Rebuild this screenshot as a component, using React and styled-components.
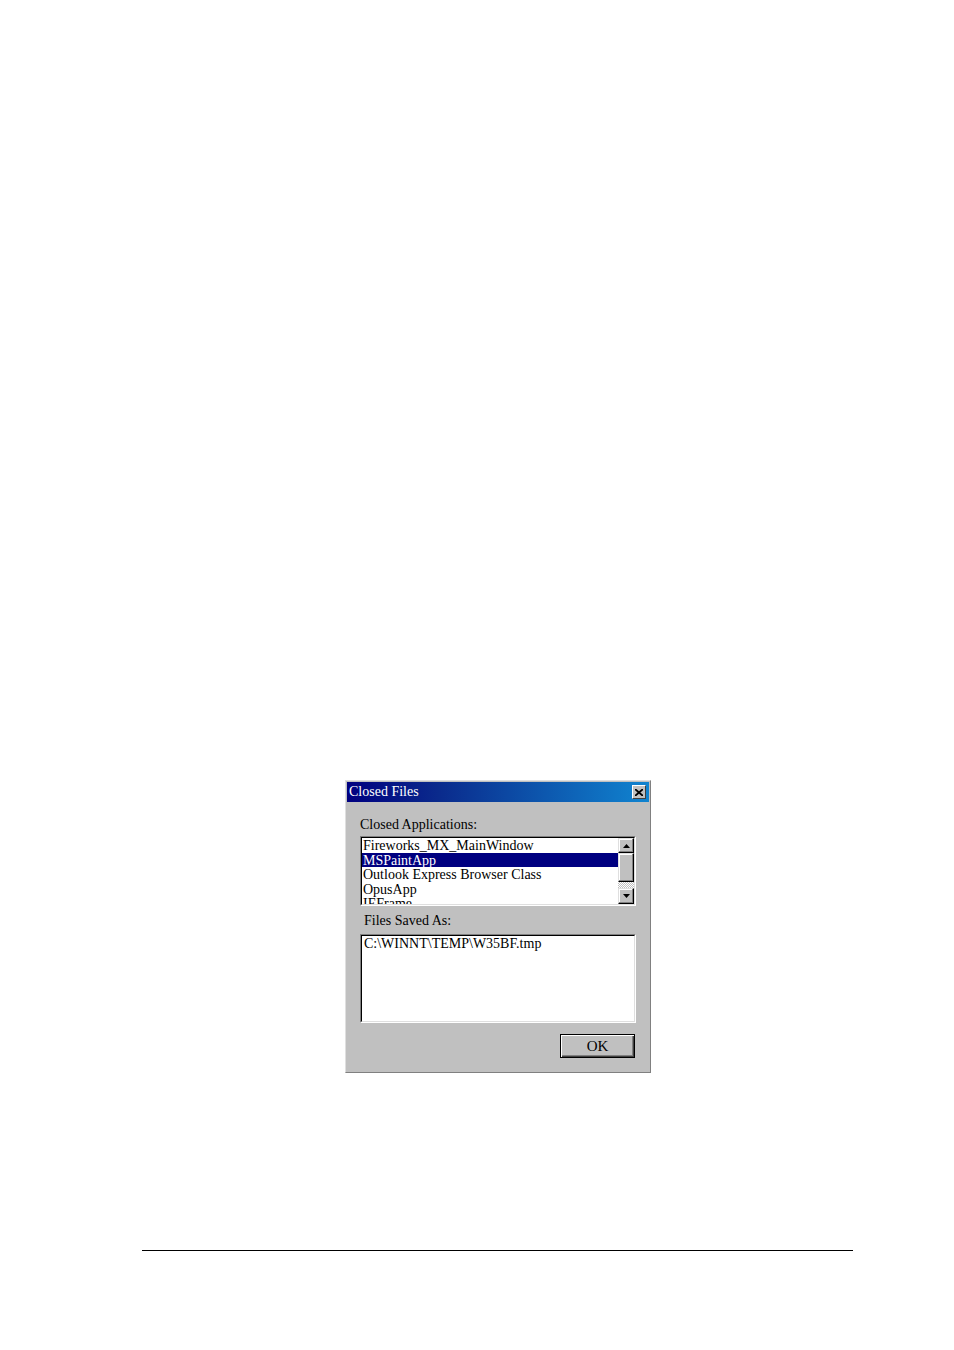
import React from 'react';
import styled, { createGlobalStyle } from 'styled-components';

const Global = createGlobalStyle`
  html, body {
    margin: 0;
    padding: 0;
    background: #ffffff;
  }
`;

const Page = styled.div`
  width: 954px;
  height: 1350px;
  box-sizing: border-box;
  padding-top: 780px;
  background: #fff;
  font-family: 'Liberation Serif', 'Times New Roman', serif;
`;

const Dialog = styled.div`
  margin-left: 345px;
  width: 306px;
  height: 293px;
  box-sizing: border-box;
  background: #c0c0c0;
  border-top: 1px solid #dfdfdf;
  border-left: 1px solid #dfdfdf;
  border-right: 1px solid #808080;
  border-bottom: 1px solid #808080;
  display: flex;
  flex-direction: column;
`;

const TitleBar = styled.div`
  height: 20px;
  margin: 1px 1px 0 1px;
  display: flex;
  align-items: center;
  justify-content: space-between;
  padding: 0 3px 0 2px;
  background: linear-gradient(to right, #000080 0%, #0a2a8c 30%, #1084d0 100%);
  color: #fff;
  font-size: 14px;
`;

const CloseButton = styled.div`
  width: 14px;
  height: 14px;
  box-sizing: border-box;
  background: #c0c0c0;
  border-top: 1px solid #fff;
  border-left: 1px solid #fff;
  border-right: 1px solid #404040;
  border-bottom: 1px solid #404040;
  display: flex;
  align-items: center;
  justify-content: center;
`;

const Body = styled.div`
  flex: 1;
  display: flex;
  flex-direction: column;
  padding: 15px 14px 0 14px;
`;

const Label = styled.div`
  font-size: 14px;
  line-height: 16px;
  color: #000;
  padding-left: ${({ indent }) => indent || 0}px;
  margin-top: ${({ top }) => top || 0}px;
  margin-bottom: ${({ gap }) => gap || 0}px;
`;

const Sunken = styled.div`
  box-sizing: border-box;
  height: ${({ h }) => h}px;
  background: #fff;
  border-top: 1px solid #808080;
  border-left: 1px solid #808080;
  border-right: 1px solid #fff;
  border-bottom: 1px solid #fff;
`;

const SunkenInner = styled.div`
  height: 100%;
  box-sizing: border-box;
  border-top: 1px solid #000;
  border-left: 1px solid #000;
  border-right: 1px solid #dfdfdf;
  border-bottom: 1px solid #dfdfdf;
  display: flex;
  overflow: hidden;
`;

const Items = styled.div`
  flex: 1;
  overflow: hidden;
`;

const Item = styled.div`
  height: 14.6px;
  line-height: 15.6px;
  font-size: 14px;
  padding-left: 1px;
  white-space: nowrap;
  background: ${({ selected }) => (selected ? '#000080' : 'transparent')};
  color: ${({ selected }) => (selected ? '#fff' : '#000')};
`;

const ScrollBar = styled.div`
  width: 16px;
  display: flex;
  flex-direction: column;
  background-color: #e0e0e0;
  background-image: repeating-conic-gradient(#c0c0c0 0 25%, #fff 0 50%);
  background-size: 2px 2px;
`;

const Raised = styled.div`
  box-sizing: border-box;
  height: ${({ h }) => h}px;
  background: #c0c0c0;
  border-top: 1px solid #dfdfdf;
  border-left: 1px solid #dfdfdf;
  border-right: 1px solid #000;
  border-bottom: 1px solid #000;
  box-shadow: inset -1px -1px 0 #808080, inset 1px 1px 0 #fff;
  display: flex;
  align-items: center;
  justify-content: center;
`;

const Track = styled.div`
  flex: 1;
`;

const PathText = styled.div`
  font-size: 14px;
  line-height: 16px;
  padding: 0 2px;
`;

const ButtonRow = styled.div`
  display: flex;
  justify-content: flex-end;
  padding-top: 11px;
  padding-right: 1px;
`;

const OkButton = styled.div`
  width: 75px;
  height: 24px;
  box-sizing: border-box;
  border: 1px solid #000;
  background: #c0c0c0;
  box-shadow: inset 1px 1px 0 #fff, inset -1px -1px 0 #404040, inset -2px -2px 0 #808080;
  display: flex;
  align-items: center;
  justify-content: center;
  font-size: 15px;
  color: #000;
`;

const FooterRule = styled.div`
  margin-top: 177px;
  margin-left: 142px;
  width: 711px;
  height: 1px;
  background: #000;
`;

const Arrow = ({ down }) => (
  <svg width="7" height="4" viewBox="0 0 7 4">
    <path d={down ? 'M0 0H7L3.5 4Z' : 'M0 4H7L3.5 0Z'} fill="#000" />
  </svg>
);

const apps = [
  'Fireworks_MX_MainWindow',
  'MSPaintApp',
  'Outlook Express Browser Class',
  'OpusApp',
  'IEFrame',
];

export default function App() {
  return (
    <Page>
      <Global />
      <Dialog>
        <TitleBar>
          <span>Closed Files</span>
          <CloseButton>
            <svg width="8" height="7" viewBox="0 0 8 7">
              <path d="M0 0L8 7M8 0L0 7" stroke="#000" strokeWidth="1.8" />
            </svg>
          </CloseButton>
        </TitleBar>
        <Body>
          <Label gap={3}>Closed Applications:</Label>
          <Sunken h={70}>
            <SunkenInner>
              <Items>
                {apps.map((a) => (
                  <Item key={a} selected={a === 'MSPaintApp'}>{a}</Item>
                ))}
              </Items>
              <ScrollBar>
                <Raised h={15}><Arrow /></Raised>
                <Raised h={29} />
                <Track />
                <Raised h={16}><Arrow down /></Raised>
              </ScrollBar>
            </SunkenInner>
          </Sunken>
          <Label indent={4} top={7} gap={5}>Files Saved As:</Label>
          <Sunken h={89}>
            <SunkenInner>
              <PathText>C:\WINNT\TEMP\W35BF.tmp</PathText>
            </SunkenInner>
          </Sunken>
          <ButtonRow>
            <OkButton>OK</OkButton>
          </ButtonRow>
        </Body>
      </Dialog>
      <FooterRule />
    </Page>
  );
}
